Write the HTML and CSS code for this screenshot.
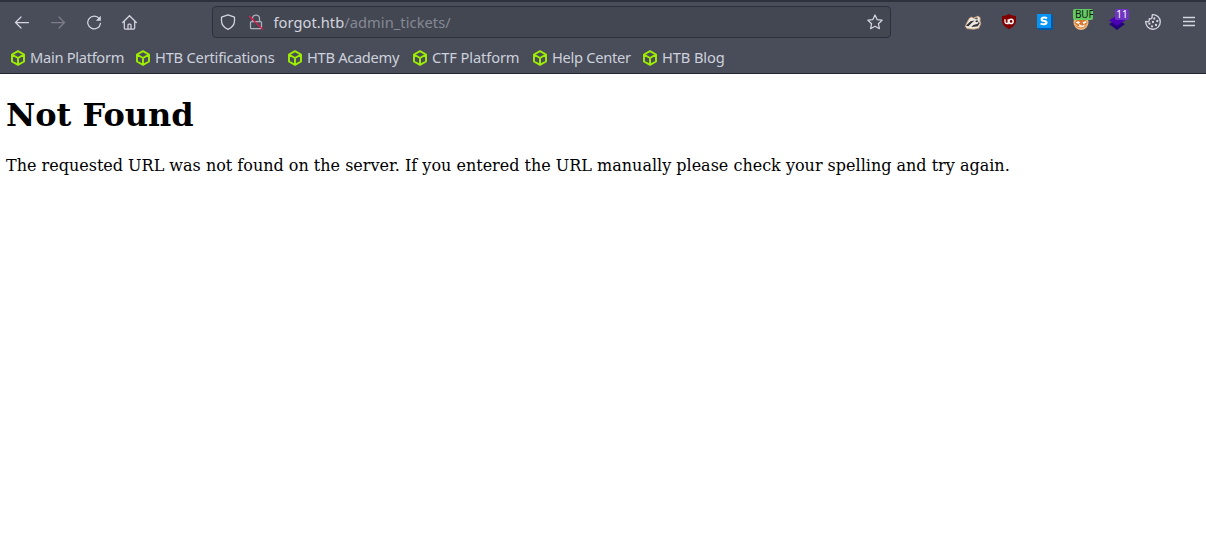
FILE: index.html
```html
<!DOCTYPE html>
<html lang="en">
<head>
<meta charset="utf-8">
<title>Not Found</title>
<link rel="stylesheet" href="styles.css">
</head>
<body>
<svg class="symbols" aria-hidden="true">
  <symbol id="cube" viewBox="0 0 16 16"><path d="M8 1.200 14 4.500v7L8 14.800 2 11.500v-7ZM2.400 4.800 8 8l5.600-3.200M8 8v6.500" fill="none" stroke="#9fef00" stroke-width="1.900" stroke-linejoin="round"/></symbol>
</svg>
<header class="browser">
  <div class="toolbar">
    <nav class="nav">
      <svg class="icon" viewBox="0 0 16 16"><path d="M14.500 8.500H1.500M7 3 1.500 8.500 7 14"/></svg>
      <svg class="icon dim" viewBox="0 0 16 16"><path d="M1.500 8.500h13M9 3 14.500 8.500 9 14"/></svg>
      <svg class="icon" viewBox="0 0 16 16"><path d="M13.300 4.700A6.400 6.400 0 1 0 14.500 9.300"/><path class="solid" d="M14.800 1.800v5H9.800Z"/></svg>
      <svg class="icon" viewBox="0 0 16 16"><path d="M.7 8.500 7.500 1.700l6.800 6.800M2.300 7.400v6.600q0 1 1 1h8.400q1 0 1-1V7.400M6 15v-4q0-1 1-1h1q1 0 1 1v4"/></svg>
    </nav>
    <div class="urlbar">
      <svg class="icon" viewBox="0 0 16 16"><path d="M8 .8 14.500 3.200v3.300c0 3.500-2 7-6.500 8.800C3.500 13.500 1.500 10 1.500 6.500V3.200Z" stroke-linejoin="round"/></svg>
      <svg class="icon lock" viewBox="0 0 16 16"><path d="M4.500 7V4.500a3.500 3.500 0 0 1 7 0V7M3.500 7.500h9q1 0 1 1v5.200q0 1-1 1h-9q-1 0-1-1V8.500q0-1 1-1Z"/><path class="slash" d="m1.500 2.300 13 12.900"/></svg>
      <span class="url">forgot.htb<span class="path">/admin_tickets/</span></span>
      <svg class="icon star" viewBox="0 0 16 16"><path d="m8 1 2.100 4.600 5 .6-3.700 3.500 1 5L8 12.300l-4.400 2.400 1-5L.9 6.200l5-.6Z" stroke-linejoin="round"/></svg>
    </div>
    <div class="extensions">
      <svg class="ext" viewBox="0 0 20 20"><path d="m2.200 14.200 2-4.200 2.300-4 2-.9 1.800 1 4.700-2 2.200 1.600-.2 3 .8 3-2 4.500-4.800 1-4-.3-3-.2Z" fill="#eee9e0" stroke="#c99870" stroke-width=".8"/><path d="m2.800 13.700 4.700-4.400 4-.8-2.800 2.600-3.200 3.100Zm5.400 1.200 2.200-2 4.200-1.200 1.300-2 .8 1.500-2 3-3.500.6Z" fill="#34343a"/><path d="m11 6.700 3-1.500 1 1.800-1.200.6Z" fill="#66605f"/><path d="m12.200 9 2-.8 1.500 1-2.600 1Z" fill="#222226"/></svg>
      <svg class="ext" viewBox="0 0 20 20"><path d="M10 2q3 2.100 7 2.100v4.700q0 5-7 8.500-7-3.500-7-8.500V4.100Q7 4.100 10 2Z" fill="#800000"/><path d="M6 7.300v2.500q0 1.700 1.600 1.700h1.600V7.300" fill="none" stroke="#fff" stroke-width="1.300"/><circle cx="12.100" cy="9.400" r="2.100" fill="none" stroke="#fff" stroke-width="1.400"/></svg>
      <svg class="ext" viewBox="0 0 20 20"><path d="m2 16 2 2h14V4l-2-2Z" fill="#0058a8"/><path d="M2 2h14v14H2Z" fill="#0894f4"/><path d="M12 6.300Q10.800 5.600 9.200 5.600 6.600 5.600 6.600 7.300T9.200 9.100 11.600 10.700 9 12.300 5.800 11.300" fill="none" stroke="#fff" stroke-width="2"/></svg>
      <div class="ext fox">
        <svg viewBox="0 0 20 20"><circle cx="10" cy="10.500" r="7.500" fill="#edb882"/><path d="m3.500 11 2-3h9l2 3-3.500 3H7Z" fill="#d77a2d"/><path d="m4.500 10.500 3-1.500 1.500 1.500-1.500 1.500Zm7 0 3-1.500 1 1.500-3 1.500Z" fill="#fff"/><path d="m8 12 3 1.500 3-1-1.500 2.500H8Z" fill="#f7e8dc"/><path d="M4.500 13.500q5 5 11 0" stroke="#e38a42" fill="none"/></svg>
        <span class="badge green">BUF</span>
      </div>
      <div class="ext stack">
        <svg viewBox="0 0 20 20"><path d="m2 12 8-4 8 4-8 6Z" fill="#24007c"/><path d="m2 8.500 8-5 8 5-8 5.300Z" fill="#4a00b5"/></svg>
        <span class="badge purple">11</span>
      </div>
      <svg class="ext cookie" viewBox="0 0 20 20"><path d="M9.400 2.700a7.300 7.300 0 1 1-6.700 6.700l2.500.4q1.500-.5 1-2.300l.2-.8 1.500.1q1.600-.5 1.200-2.100Z" stroke-linejoin="round"/><g class="solid"><circle cx="11.300" cy="6.500" r="1.150"/><circle cx="10" cy="10" r="1.150"/><circle cx="14.300" cy="9" r="1.150"/><circle cx="6.400" cy="11.700" r="1.150"/><circle cx="9" cy="14.300" r="1.150"/><circle cx="13" cy="13" r="1.150"/></g></svg>
      <svg class="ext menu" viewBox="0 0 20 20"><path d="M4 5.500h12M4 9.500h12M4 13.500h12"/></svg>
    </div>
  </div>
  <nav class="bookmarks">
    <span class="bookmark"><svg viewBox="0 0 16 16"><use href="#cube"/></svg>Main Platform</span>
    <span class="bookmark cert"><svg viewBox="0 0 16 16"><use href="#cube"/></svg>HTB Certifications</span>
    <span class="bookmark"><svg viewBox="0 0 16 16"><use href="#cube"/></svg>HTB Academy</span>
    <span class="bookmark ctf"><svg viewBox="0 0 16 16"><use href="#cube"/></svg>CTF Platform</span>
    <span class="bookmark help"><svg viewBox="0 0 16 16"><use href="#cube"/></svg>Help Center</span>
    <span class="bookmark blog"><svg viewBox="0 0 16 16"><use href="#cube"/></svg>HTB Blog</span>
  </nav>
</header>
<main class="page">
  <h1>Not Found</h1>
  <p>The requested URL was not found on the server. If you entered the URL manually please check your spelling and try again.</p>
</main>
</body>
</html>
```

FILE: styles.css
```css
* { box-sizing: border-box; }
body { margin: 0; background: #fff; overflow: hidden; }
.symbols { display: none; }
svg { display: block; flex: none; }
.browser {
  height: 74px;
  background: #494d59;
  border-top: 2px solid #2e313c;
  border-bottom: 1px solid #262433;
  color: #cdd1dd;
  font: 14.667px/20px "Noto Sans", sans-serif;
}
.toolbar { height: 40px; display: flex; align-items: center; padding: 0 7px 0 14px; }
.nav { display: flex; gap: 20px; width: 198px; }
.icon { width: 16px; height: 16px; fill: none; stroke: #d3d5df; stroke-width: 1.25; stroke-linecap: round; }
.solid { fill: #d3d5df; stroke: none; }
.dim { stroke: #7c7f8a; }
.urlbar {
  width: 679px;
  height: 32px;
  display: flex;
  align-items: center;
  padding: 0 7px;
  background: #434752;
  border: 1px solid #2d303b;
  border-radius: 4px;
}
.lock { margin-left: 12px; stroke: #aeb2bf; }
.slash { stroke: #e2194b; }
.url { margin-left: 9.500px; color: #d3d5df; white-space: nowrap; letter-spacing: .05px; }
.path { color: #868995; }
.star { margin-left: auto; }
.extensions { display: flex; gap: 16px; margin-left: auto; }
.ext { width: 20px; height: 20px; position: relative; }
.ext > svg { width: 20px; height: 20px; }
.cookie, .menu { fill: none; stroke: #d3d5df; stroke-width: 1.35; }
.badge { position: absolute; font-size: 10px; line-height: 11px; text-align: center; border-radius: 2px; }
.green { left: 2px; top: -3px; width: 20px; height: 11px; padding-left: 2px; background: #63c963; color: #101710; text-align: left; letter-spacing: -.2px; overflow: hidden; }
.purple { left: 8px; top: -3px; width: 14px; height: 11px; background: #6d35c2; color: #fff; }
.bookmarks { height: 30px; display: flex; align-items: center; padding-left: 10px; }
.bookmark { width: 125px; display: flex; align-items: center; gap: 4px; white-space: nowrap; letter-spacing: -.3px; }
.bookmark svg { width: 16px; height: 16px; margin-top: 2px; }
.cert { width: 152px; letter-spacing: -.2px; }
.ctf { width: 120px; letter-spacing: -.1px; }
.help { width: 110px; }
.blog { letter-spacing: -.1px; }
.page { padding: 0 6px; color: #000; font: 16px/19px "DejaVu Serif", serif; }
.page h1 { margin: 22px 0; font-size: 32px; line-height: 38px; }
.page p { margin: 0; white-space: nowrap; }
```
